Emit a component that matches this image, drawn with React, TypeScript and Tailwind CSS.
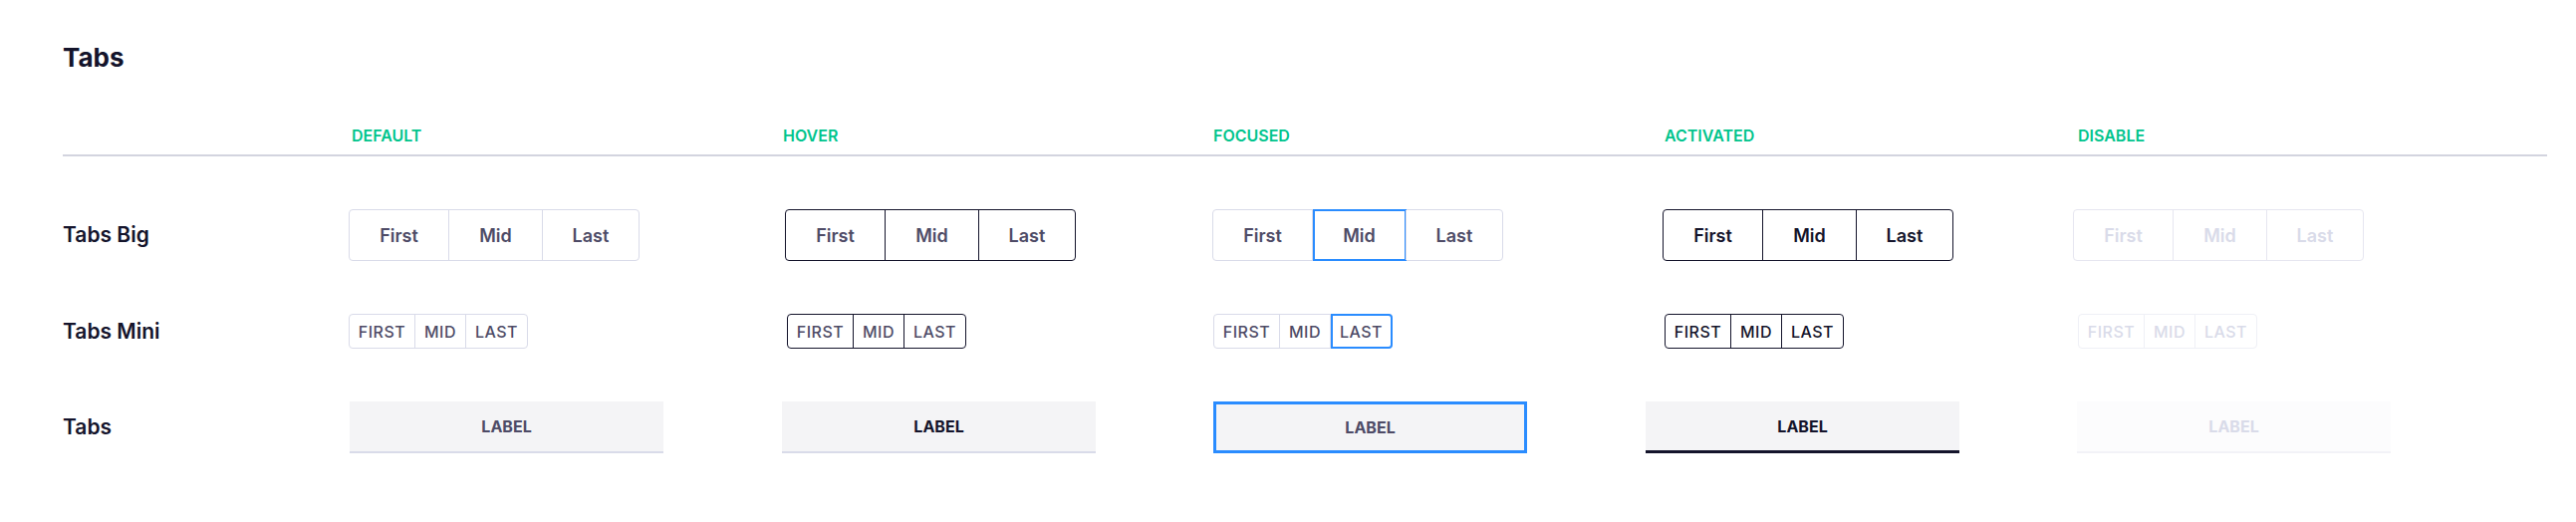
import React from 'react';

type Variant = 'default' | 'hover' | 'focused' | 'activated' | 'disabled';

const columns: { key: Variant; title: string; head: string; big: string; mini: string; label: string }[] = [
  { key: 'default', title: 'DEFAULT', head: 'ml-[3px]', big: 'ml-0', mini: 'ml-0', label: 'ml-[1px]' },
  { key: 'hover', title: 'HOVER', head: 'ml-[1px]', big: 'ml-[3px]', mini: 'ml-[5px]', label: 'ml-0' },
  { key: 'focused', title: 'FOCUSED', head: 'ml-[1px]', big: 'ml-0', mini: 'ml-[1px]', label: 'ml-[1px]' },
  { key: 'activated', title: 'ACTIVATED', head: 'ml-[19px]', big: 'ml-[17px]', mini: 'ml-[19px]', label: 'ml-0' },
  { key: 'disabled', title: 'DISABLE', head: 'ml-[5px]', big: 'ml-0', mini: 'ml-[5px]', label: 'ml-[4px]' },
];

const grid = 'grid grid-cols-[287px_435px_432px_435px_429px_1fr]';

const shell: Record<Variant, string> = {
  default: 'border-[#d9dbe9] text-[#4e4b66]',
  hover: 'border-[#14142b] text-[#4e4b66]',
  focused: 'border-[#d9dbe9] text-[#4e4b66]',
  activated: 'border-[#14142b] text-[#14142b]',
  disabled: 'border-[#e6e6f0] text-[#d9dbe9]',
};

const divider: Record<Variant, string> = {
  default: 'border-[#d9dbe9]',
  hover: 'border-[#14142b]',
  focused: 'border-[#d9dbe9]',
  activated: 'border-[#14142b]',
  disabled: 'border-[#e6e6f0]',
};

function BigTabs({ v, className }: { v: Variant; className: string }) {
  const items = [
    { t: 'First', w: 'w-[99px]' },
    { t: 'Mid', w: 'w-[94px]' },
    { t: 'Last', w: 'w-[97px]' },
  ];
  return (
    <div className={`flex h-[52px] rounded-[4px] border ${shell[v]} ${className}`}>
      {items.map((it, i) => (
        <div
          key={it.t}
          className={`relative flex items-center justify-center text-[18px] font-semibold ${it.w} ${i > 0 ? `border-l ${divider[v]}` : ''}`}
        >
          {it.t}
          {v === 'focused' && i === 1 && (
            <span className="absolute -top-px -bottom-px left-0 -right-px border-2 border-[#2a8cff]" />
          )}
        </div>
      ))}
    </div>
  );
}

function MiniTabs({ v, className }: { v: Variant; className: string }) {
  const items = [
    { t: 'FIRST', w: 'w-[65px]' },
    { t: 'MID', w: 'w-[51px]' },
    { t: 'LAST', w: 'w-[62px]' },
  ];
  const s = v === 'disabled' ? 'border-[#eff0f6] text-[#d9dbe9]' : shell[v];
  const d = v === 'disabled' ? 'border-[#eff0f6]' : divider[v];
  return (
    <div className={`flex h-[35px] rounded-[4px] border ${s} ${className}`}>
      {items.map((it, i) => (
        <div
          key={it.t}
          className={`relative flex items-center justify-center text-[16px] font-medium tracking-[0.5px] ${it.w} ${i > 0 ? `border-l ${d}` : ''}`}
        >
          {it.t}
          {v === 'focused' && i === 2 && (
            <span className="absolute -top-px -bottom-px left-0 -right-px rounded-r-[4px] border-2 border-[#2a8cff]" />
          )}
        </div>
      ))}
    </div>
  );
}

function LabelTab({ v, className }: { v: Variant; className: string }) {
  const look: Record<Variant, string> = {
    default: 'bg-[#f4f4f6] border-b-2 border-[#d9dbe9] text-[#4e4b66]',
    hover: 'bg-[#f4f4f6] border-b-2 border-[#d9dbe9] text-[#14142b]',
    focused: 'bg-[#f4f4f6] border-[3px] border-[#2a8cff] text-[#4e4b66]',
    activated: 'bg-[#f4f4f6] border-b-[3px] border-[#14142b] text-[#14142b]',
    disabled: 'bg-[#fcfcfd] border-b-2 border-[#f2f2f7] text-[#d9dbe9]',
  };
  return (
    <div className={`flex h-[52px] w-[315px] items-center justify-center text-[16px] font-bold ${look[v]} ${className}`}>
      LABEL
    </div>
  );
}

export default function App() {
  return (
    <div className="h-[524px] w-[2586px] bg-white pl-[63px] pt-[41px] font-['Inter','Noto_Sans',sans-serif]">
      <h1 className="text-[26px] font-bold leading-[33px] text-[#14142b]">Tabs</h1>

      <div className={`${grid} mt-[52px]`}>
        <div />
        {columns.map((c) => (
          <div key={c.key} className={`text-[16px] font-semibold leading-[20px] text-[#00c48c] ${c.head}`}>
            {c.title}
          </div>
        ))}
      </div>

      <div className="mt-[9px] h-[2px] w-[2494px] bg-[#d3d4df]" />

      <div className={`${grid} mt-[53px] h-[52px] items-center`}>
        <div className="text-[21px] font-semibold text-[#14142b]">Tabs Big</div>
        {columns.map((c) => (
          <div key={c.key} className="flex">
            <BigTabs v={c.key} className={c.big} />
          </div>
        ))}
      </div>

      <div className={`${grid} mt-[53px] h-[35px] items-center`}>
        <div className="text-[21px] font-semibold text-[#14142b]">Tabs Mini</div>
        {columns.map((c) => (
          <div key={c.key} className="flex">
            <MiniTabs v={c.key} className={c.mini} />
          </div>
        ))}
      </div>

      <div className={`${grid} mt-[53px] h-[52px] items-center`}>
        <div className="text-[21px] font-semibold text-[#14142b]">Tabs</div>
        {columns.map((c) => (
          <div key={c.key} className="flex">
            <LabelTab v={c.key} className={c.label} />
          </div>
        ))}
      </div>
    </div>
  );
}
